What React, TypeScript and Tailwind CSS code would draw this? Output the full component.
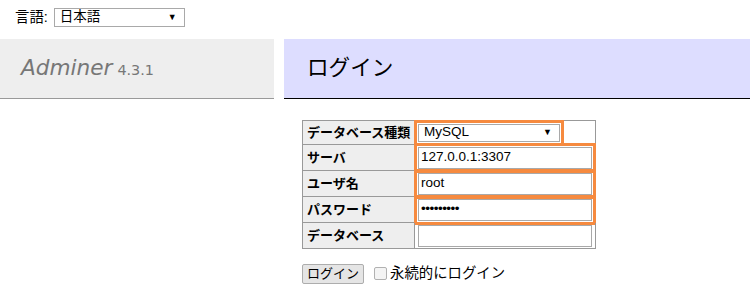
const rows = [
  { label: 'サーバ', value: '127.0.0.1:3307', marked: true },
  { label: 'ユーザ名', value: 'root', marked: true },
  { label: 'パスワード', value: '•••••••••', marked: true, password: true },
  { label: 'データベース', value: '', marked: false },
];

function FakeSelect({ value, className }: { value: string; className: string }) {
  return (
    <div className={`flex items-center justify-between border border-[#a9a9a9] bg-white pl-[5px] pr-[7px] ${className}`}>
      <span>{value}</span>
      <span className="text-[9px] leading-none">▼</span>
    </div>
  );
}

export default function App() {
  return (
    <div className="h-[300px] w-[750px] overflow-hidden bg-white font-['Liberation_Sans','Noto_Sans_CJK_JP',sans-serif] text-black">
      {/* language */}
      <div className="flex h-[39px] items-start gap-[6px] pl-[15px] pt-[8px] text-[14.4px]">
        <span className="leading-[19px]">言語:</span>
        <FakeSelect value="日本語" className="h-[19px] w-[131px] text-[13.5px]" />
      </div>

      {/* headings */}
      <div className="flex h-[60px]">
        <div className="flex w-[274px] items-center border-b border-[#999] bg-[#eee] pl-[21px] font-['DejaVu_Sans',sans-serif] text-[#777]">
          <span className="text-[21.6px] italic">Adminer</span>
          <span className="ml-[5px] mt-[5px] text-[14.4px]">4.3.1</span>
        </div>
        <div className="ml-[10px] flex flex-1 items-center border-b border-black bg-[#ddf] pl-[23px] text-[21.6px]">
          ログイン
        </div>
      </div>

      {/* login form */}
      <div className="pl-[302px] pt-[21px]">
        <div className="grid w-[294px] grid-cols-[112px_181px] border-l border-t border-[#999] text-[13px]">
          <div className="flex h-[24px] items-center border-b border-r border-[#999] bg-[#eee] pl-[4px] font-bold">
            データベース種類
          </div>
          <div className="flex h-[24px] items-center border-b border-r border-[#999] pl-[3px]">
            <FakeSelect
              value="MySQL"
              className="h-[18px] w-[142px] text-[13.5px] outline-[3px] outline-offset-1 outline-[#f68a3f]"
            />
          </div>
          {rows.map((r) => (
            <div key={r.label} className="contents">
              <div className="flex h-[26px] items-center border-b border-r border-[#999] bg-[#eee] pl-[4px] font-bold">
                {r.label}
              </div>
              <div className="flex h-[26px] items-center border-b border-r border-[#999] pl-[3px]">
                <div
                  className={`flex h-[22px] w-[174px] items-center border border-[#a9a9a9] bg-white pl-[2px] text-[13.5px] ${
                    r.marked ? 'outline-[3px] outline-offset-1 outline-[#f68a3f]' : ''
                  } ${r.password ? 'text-[10px] tracking-[-0.5px]' : ''}`}
                >
                  {r.value}
                </div>
              </div>
            </div>
          ))}
        </div>

        <div className="mt-[14px] flex items-center text-[14.4px]">
          <div className="flex h-[20px] w-[62px] items-center justify-center rounded-[2px] border border-[#adadad] bg-[#e5e5e5] text-[13px]">
            ログイン
          </div>
          <div className="ml-[10px] h-[13px] w-[13px] rounded-[2px] border border-[#b1b1b1] bg-[#f4f4f4]" />
          <span className="ml-[3px]">永続的にログイン</span>
        </div>
      </div>
    </div>
  );
}
